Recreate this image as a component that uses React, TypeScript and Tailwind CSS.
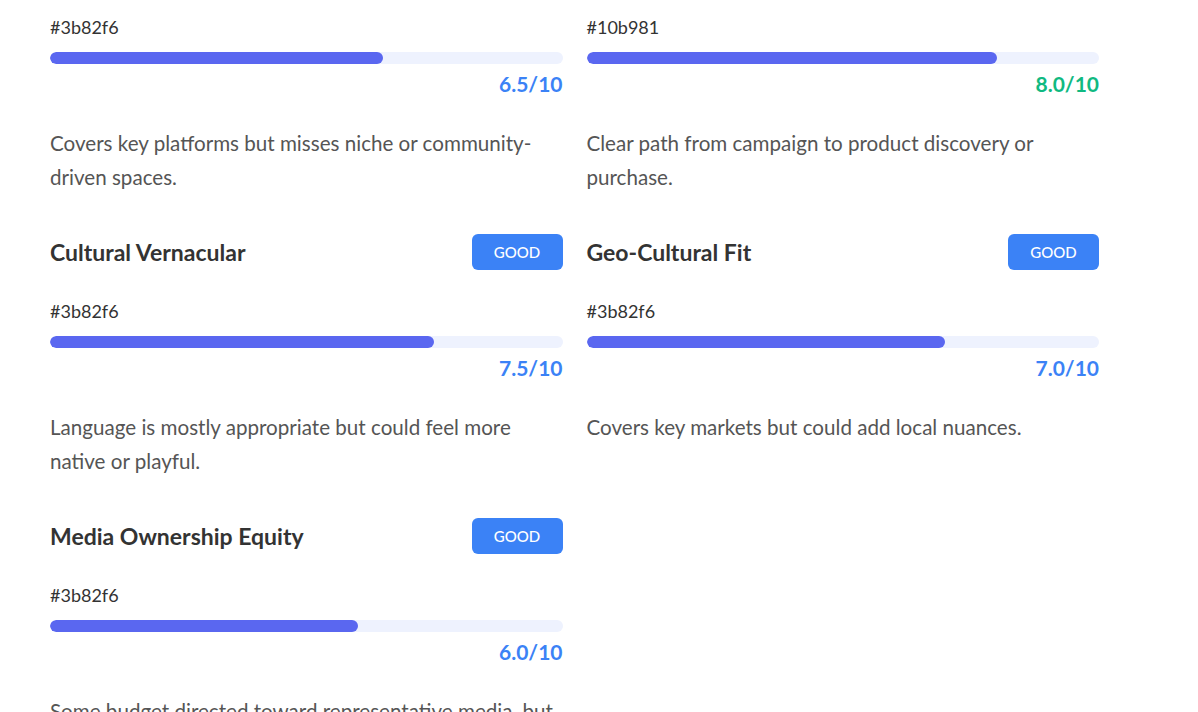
import React from 'react';

type Metric = {
  title: string;
  badge: string;
  badgeClass: string;
  color: string;
  score: number;
  scoreClass: string;
  note: string;
};

const METRICS: Metric[] = [
  {
    title: 'Platform Diversity',
    badge: 'GOOD',
    badgeClass: 'bg-[#3b82f6]',
    color: '#3b82f6',
    score: 6.5,
    scoreClass: 'text-[#3b82f6]',
    note: 'Covers key platforms but misses niche or community-driven spaces.',
  },
  {
    title: 'Conversion Pathway',
    badge: 'EXCELLENT',
    badgeClass: 'bg-[#10b981]',
    color: '#10b981',
    score: 8.0,
    scoreClass: 'text-[#10b981]',
    note: 'Clear path from campaign to product discovery or purchase.',
  },
  {
    title: 'Cultural Vernacular',
    badge: 'GOOD',
    badgeClass: 'bg-[#3b82f6]',
    color: '#3b82f6',
    score: 7.5,
    scoreClass: 'text-[#3b82f6]',
    note: 'Language is mostly appropriate but could feel more native or playful.',
  },
  {
    title: 'Geo-Cultural Fit',
    badge: 'GOOD',
    badgeClass: 'bg-[#3b82f6]',
    color: '#3b82f6',
    score: 7.0,
    scoreClass: 'text-[#3b82f6]',
    note: 'Covers key markets but could add local nuances.',
  },
  {
    title: 'Media Ownership Equity',
    badge: 'GOOD',
    badgeClass: 'bg-[#3b82f6]',
    color: '#3b82f6',
    score: 6.0,
    scoreClass: 'text-[#3b82f6]',
    note: 'Some budget directed toward representative media, but more could be allocated to diverse-owned outlets.',
  },
];

const MetricCard: React.FC<{ m: Metric }> = ({ m }) => (
  <div className="flex flex-col">
    <div className="flex items-center justify-between h-9">
      <h3 className="text-[23px] font-bold text-[#333333]">{m.title}</h3>
      <span className={`${m.badgeClass} text-white text-[15px] font-medium h-9 w-[91px] rounded-md flex items-center justify-center`}>
        {m.badge}
      </span>
    </div>
    <div className="mt-[28px] text-[18px] leading-[27px] text-[#333333]">{m.color}</div>
    <div className="mt-[11px] h-3 w-full rounded-full bg-[#eef2fe] overflow-hidden">
      <div className="h-full rounded-full bg-[#5a67f0]" style={{ width: `${m.score * 10}%` }} />
    </div>
    <div className={`mt-[6px] text-right text-[21px] leading-[28px] font-bold ${m.scoreClass}`}>
      {m.score.toFixed(1)}/10
    </div>
    <p className="mt-[28px] text-[20.6px] leading-[34px] text-[#555555]">{m.note}</p>
  </div>
);

const App: React.FC = () => {
  return (
    <div className="h-[712px] overflow-hidden bg-white font-['Lato','Open_Sans',sans-serif]">
      <div className="-mt-[50px] pl-[50px] w-[1099px]">
        <div className="grid grid-cols-2 gap-x-6 gap-y-[40px]">
          {METRICS.map((m) => (
            <MetricCard key={m.title} m={m} />
          ))}
        </div>
      </div>
    </div>
  );
};

export default App;
